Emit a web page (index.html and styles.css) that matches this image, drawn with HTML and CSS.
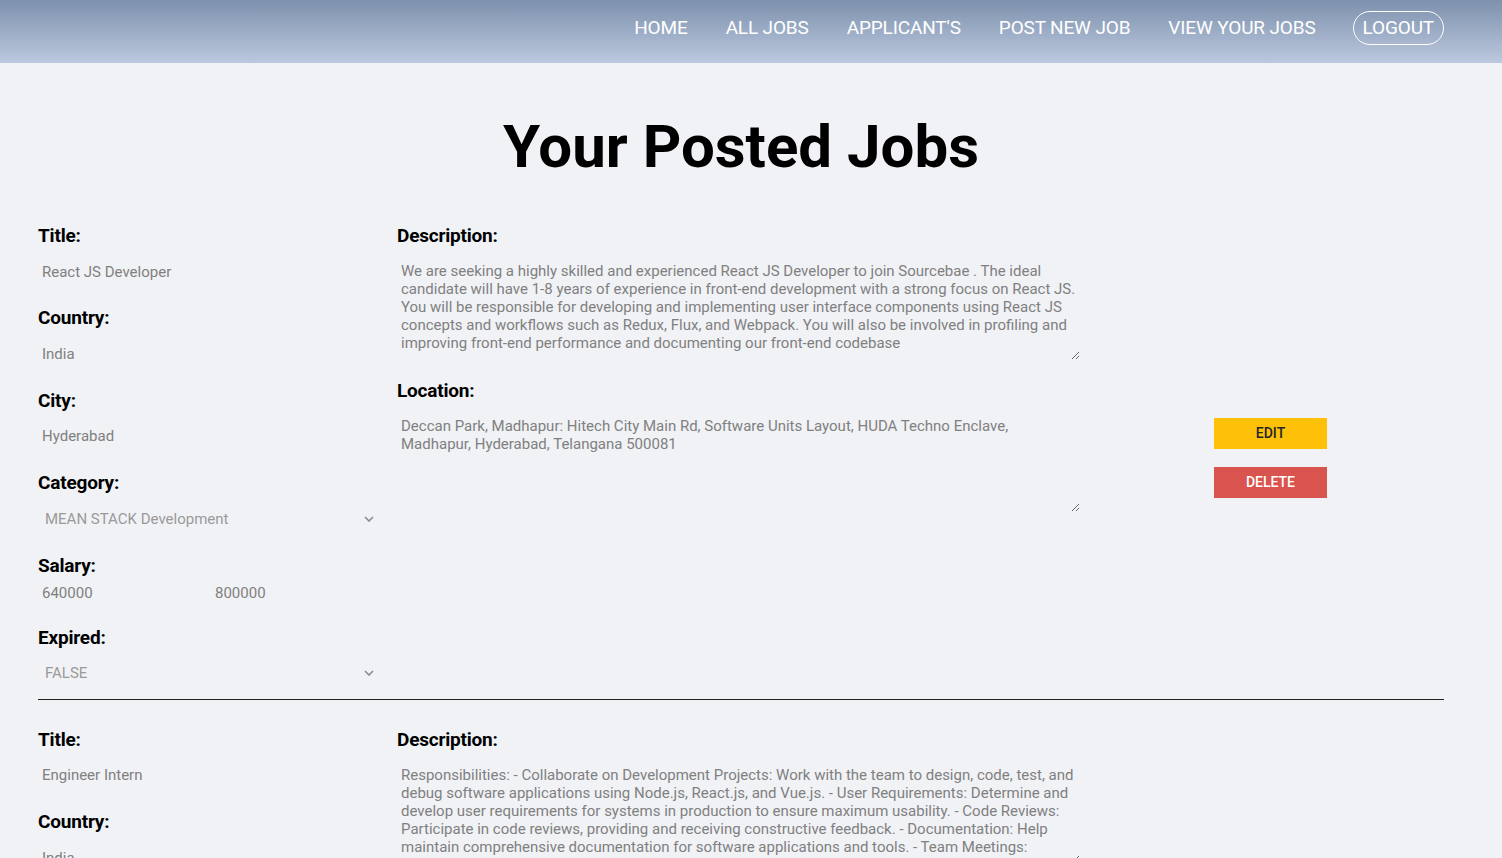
FILE: index.html
```html
<!DOCTYPE html>
<html lang="en">
<head>
<meta charset="utf-8">
<title>Your Posted Jobs</title>
<link rel="stylesheet" href="styles.css">
</head>
<body>
<nav class="navbar">
  <ul class="nav-links">
    <li><a href="#">HOME</a></li>
    <li><a href="#">ALL JOBS</a></li>
    <li><a href="#">APPLICANT'S</a></li>
    <li><a href="#">POST NEW JOB</a></li>
    <li><a href="#">VIEW YOUR JOBS</a></li>
    <li><a href="#" class="logout">LOGOUT</a></li>
  </ul>
</nav>
<main class="page">
  <h1 class="page-title">Your Posted Jobs</h1>

  <section class="job">
    <div class="col-left">
      <div class="field">
        <label class="label">Title:</label>
        <input class="input" type="text" value="React JS Developer" readonly>
      </div>
      <div class="field">
        <label class="label">Country:</label>
        <input class="input" type="text" value="India" readonly>
      </div>
      <div class="field">
        <label class="label">City:</label>
        <input class="input" type="text" value="Hyderabad" readonly>
      </div>
      <div class="field">
        <label class="label">Category:</label>
        <div class="select"><span>MEAN STACK Development</span><svg class="chev" width="10" height="6" viewBox="0 0 10 6"><path d="M1 1l4 4 4-4" fill="none" stroke="#8a8a8a" stroke-width="1.6"/></svg></div>
      </div>
      <div class="field salary-field">
        <label class="label">Salary:</label>
        <div class="salary-row">
          <input class="input small" type="text" value="640000" readonly>
          <input class="input small" type="text" value="800000" readonly>
        </div>
      </div>
      <div class="field last">
        <label class="label">Expired:</label>
        <div class="select"><span>FALSE</span><svg class="chev" width="10" height="6" viewBox="0 0 10 6"><path d="M1 1l4 4 4-4" fill="none" stroke="#8a8a8a" stroke-width="1.6"/></svg></div>
      </div>
    </div>
    <div class="col-mid">
      <div class="field desc-field">
        <label class="label">Description:</label>
        <textarea class="textarea" readonly>We are seeking a highly skilled and experienced React JS Developer to join Sourcebae . The ideal candidate will have 1-8 years of experience in front-end development with a strong focus on React JS. You will be responsible for developing and implementing user interface components using React JS concepts and workflows such as Redux, Flux, and Webpack. You will also be involved in profiling and improving front-end performance and documenting our front-end codebase</textarea>
      </div>
      <div class="field">
        <label class="label">Location:</label>
        <textarea class="textarea location" readonly>Deccan Park, Madhapur: Hitech City Main Rd, Software Units Layout, HUDA Techno Enclave, Madhapur, Hyderabad, Telangana 500081</textarea>
      </div>
    </div>
    <div class="col-right">
      <button class="btn btn-edit">EDIT</button>
      <button class="btn btn-delete">DELETE</button>
    </div>
  </section>

  <section class="job">
    <div class="col-left">
      <div class="field">
        <label class="label">Title:</label>
        <input class="input" type="text" value="Engineer Intern" readonly>
      </div>
      <div class="field">
        <label class="label">Country:</label>
        <input class="input" type="text" value="India" readonly>
      </div>
      <div class="field">
        <label class="label">City:</label>
        <input class="input" type="text" value="Bangalore" readonly>
      </div>
      <div class="field">
        <label class="label">Category:</label>
        <div class="select"><span>Web Development</span><svg class="chev" width="10" height="6" viewBox="0 0 10 6"><path d="M1 1l4 4 4-4" fill="none" stroke="#8a8a8a" stroke-width="1.6"/></svg></div>
      </div>
      <div class="field salary-field">
        <label class="label">Salary:</label>
        <div class="salary-row">
          <input class="input small" type="text" value="120000" readonly>
          <input class="input small" type="text" value="240000" readonly>
        </div>
      </div>
      <div class="field last">
        <label class="label">Expired:</label>
        <div class="select"><span>FALSE</span><svg class="chev" width="10" height="6" viewBox="0 0 10 6"><path d="M1 1l4 4 4-4" fill="none" stroke="#8a8a8a" stroke-width="1.6"/></svg></div>
      </div>
    </div>
    <div class="col-mid">
      <div class="field desc-field">
        <label class="label">Description:</label>
        <textarea class="textarea" readonly>Responsibilities: - Collaborate on Development Projects: Work with the team to design, code, test, and debug software applications using Node.js, React.js, and Vue.js. - User Requirements: Determine and develop user requirements for systems in production to ensure maximum usability. - Code Reviews: Participate in code reviews, providing and receiving constructive feedback. - Documentation: Help maintain comprehensive documentation for software applications and tools. - Team Meetings: Participate in regular team meetings.</textarea>
      </div>
      <div class="field">
        <label class="label">Location:</label>
        <textarea class="textarea location" readonly>Bangalore, Karnataka, India</textarea>
      </div>
    </div>
    <div class="col-right">
      <button class="btn btn-edit">EDIT</button>
      <button class="btn btn-delete">DELETE</button>
    </div>
  </section>
</main>
</body>
</html>
```
FILE: styles.css
```css
html {
  scrollbar-width: none;
}
::-webkit-scrollbar {
  display: none;
}
* {
  box-sizing: border-box;
}
body {
  margin: 0;
  background: #f1f2f6;
  font-family: Roboto, "Liberation Sans", sans-serif;
  color: #000;
}
.navbar {
  height: 63px;
  background: linear-gradient(to bottom, #7d91ad 0%, #bcc8de 100%);
  display: flex;
  justify-content: flex-end;
  align-items: flex-start;
  padding: 11px 58px 0 0;
}
.nav-links {
  list-style: none;
  margin: 0;
  padding: 0;
  display: flex;
  align-items: center;
  gap: 38px;
  height: 34px;
}
.nav-links a {
  display: block;
  color: #fff;
  text-decoration: none;
  font-size: 19px;
  line-height: 22px;
  letter-spacing: -0.15px;
}
.nav-links li:last-child {
  margin-left: -1px;
}
.nav-links a.logout {
  border: 1px solid #fff;
  border-radius: 17px;
  height: 34px;
  padding: 5px 9px 0;
}
.page {
  padding: 0 58px 0 38px;
}
.page-title {
  margin: 0;
  padding-top: 48px;
  height: 162px;
  text-align: center;
  font-size: 60px;
  font-weight: 700;
  line-height: 72px;
}
.job {
  display: grid;
  grid-template-columns: 342px 683px 1fr;
  column-gap: 17px;
  border-bottom: 1px solid #222;
  padding-bottom: 8px;
  margin-bottom: 29px;
}
.job + .job {
  border-bottom: none;
}
.field {
  display: flex;
  flex-direction: column;
  margin-bottom: 18.4px;
}
.field.last {
  margin-bottom: 0;
}
.desc-field {
  margin-bottom: 20px;
}
.label {
  font-size: 19px;
  font-weight: 700;
  line-height: 22px;
  margin-bottom: 7px;
  letter-spacing: -0.2px;
}
.input {
  border: none;
  background: transparent;
  font-family: Roboto, "Liberation Sans", sans-serif;
  font-size: 15px;
  color: #808080;
  height: 35px;
  padding: 0 4px;
  outline: none;
}
.salary-field .label {
  margin-bottom: 0;
}
.salary-row {
  display: flex;
}
.input.small {
  width: 173px;
  height: 32px;
}
.select {
  height: 35px;
  display: flex;
  align-items: center;
  justify-content: space-between;
  padding: 0 6px 0 7px;
  font-size: 15px;
  color: #9a9a9a;
}
.chev {
  display: block;
}
.textarea {
  display: block;
  width: 683px;
  height: 106px;
  border: none;
  background: transparent;
  font-family: Roboto, "Liberation Sans", sans-serif;
  font-size: 15px;
  line-height: 18px;
  color: #808080;
  padding: 8px 4px 0 4px;
  resize: vertical;
  outline: none;
  overflow: hidden;
}
.textarea.location {
  height: 103px;
}
.col-right {
  display: flex;
  flex-direction: column;
  align-items: center;
  justify-content: center;
  gap: 18px;
}
.btn {
  width: 113px;
  height: 31px;
  border: none;
  border-radius: 0;
  font-family: Roboto, "Liberation Sans", sans-serif;
  font-size: 14px;
  font-weight: 500;
  cursor: pointer;
}
.btn-edit {
  background: #ffc107;
  color: #212529;
}
.btn-delete {
  background: #d9534f;
  color: #fff;
}
```
